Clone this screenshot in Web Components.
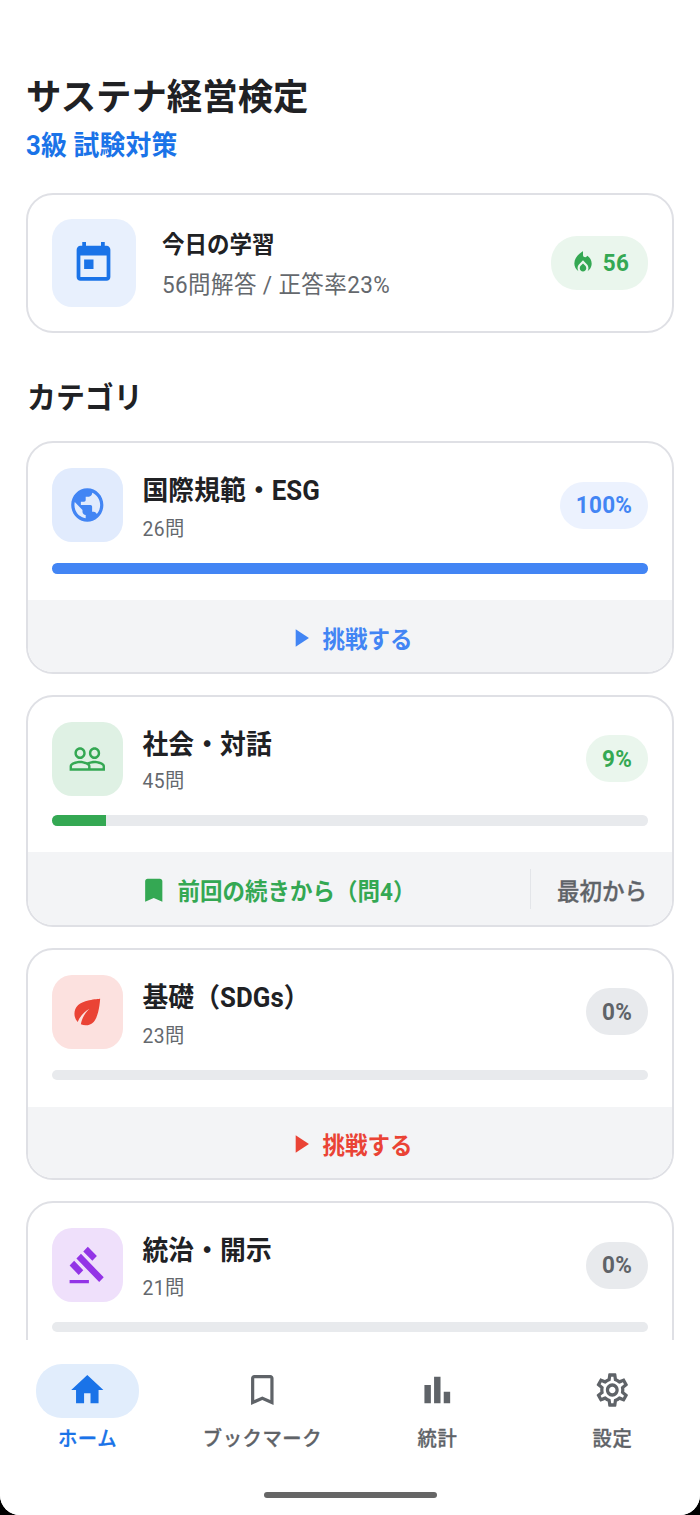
<!DOCTYPE html>
<html lang="ja">
<head>
<meta charset="utf-8">
<title>サステナ経営検定</title>
<style>
html,body{margin:0;padding:0;background:#000;height:1515px;overflow:hidden}
body{font-family:Roboto,"Noto Sans CJK JP",sans-serif;color:#202124}
</style>
</head>
<body>
<study-app></study-app>
<script>
const ICONS = {
  today: '<path d="M19 4h-1V2h-2v2H8V2H6v2H5c-1.11 0-1.99.9-1.99 2L3 20c0 1.1.89 2 2 2h14c1.1 0 2-.9 2-2V6c0-1.1-.9-2-2-2zm0 16H5V9h14v11zM7 11h5v5H7z"/>',
  flame: '<path d="M12 12.9l-2.13 2.09C9.31 15.55 9 16.28 9 17.06 9 18.68 10.35 20 12 20s3-1.32 3-2.94c0-.78-.31-1.52-.87-2.07L12 12.9zM16 6l-.44.55C14.38 8.02 12 7.19 12 5.3V2S4 6 4 13c0 2.92 1.56 5.47 3.89 6.86-.56-.79-.89-1.76-.89-2.8 0-1.32.52-2.56 1.47-3.5L12 10.1l3.53 3.47c.95.93 1.47 2.17 1.47 3.5 0 1.02-.31 1.96-.85 2.75 1.89-1.15 3.29-3.06 3.71-5.3.66-3.55-1.07-6.9-3.86-8.52z"/>',
  globe: '<path d="M12 2C6.48 2 2 6.48 2 12s4.48 10 10 10 10-4.48 10-10S17.52 2 12 2zm-1 17.93c-3.95-.49-7-3.85-7-7.93 0-.62.08-1.21.21-1.79L9 15v1c0 1.1.9 2 2 2v1.93zm6.9-2.54c-.26-.81-1-1.39-1.9-1.39h-1v-3c0-.55-.45-1-1-1H8v-2h2c.55 0 1-.45 1-1V7h2c1.1 0 2-.9 2-2v-.41c2.93 1.19 5 4.06 5 7.41 0 2.08-.8 3.97-2.1 5.39z"/>',
  people: '<path d="M16.5 13c-1.2 0-3.07.34-4.5 1-1.43-.67-3.3-1-4.5-1C5.33 13 1 14.08 1 16.25V19h22v-2.75c0-2.17-4.33-3.25-6.5-3.25zm-4 4.5h-10v-1.25c0-.54 2.56-1.75 5-1.75s5 1.21 5 1.75v1.25zm9 0H14v-1.25c0-.46-.2-.86-.52-1.22.88-.3 1.96-.53 3.02-.53 2.44 0 5 1.21 5 1.75v1.25zM7.500 12c1.93 0 3.500-1.570 3.500-3.500S9.430 5 7.500 5 4 6.570 4 8.500 5.570 12 7.500 12zm0-5.500c1.100 0 2 .9 2 2s-.9 2-2 2-2-.9-2-2 .9-2 2-2zm9 5.500c1.930 0 3.500-1.570 3.500-3.500S18.430 5 16.500 5 13 6.570 13 8.500s1.570 3.500 3.500 3.500zm0-5.500c1.100 0 2 .9 2 2s-.9 2-2 2-2-.9-2-2 .9-2 2-2z"/>',
  leaf: '<path d="M6.050 8.050c-2.730 2.730-2.730 7.150-.02 9.880 1.470-3.400 4.090-6.240 7.360-7.930-2.770 2.340-4.710 5.610-5.390 9.320 2.600 1.230 5.800.78 7.950-1.370C19.430 14.470 20 4 20 4S9.530 4.570 6.050 8.050z"/>',
  gavel: '<path d="M1 21h12v2H1zM5.245 8.070l2.830-2.827 14.140 14.142-2.828 2.828zM12.317 1l5.657 5.656-2.830 2.830-5.654-5.660zM3.825 9.485l5.657 5.657-2.828 2.828-5.657-5.657z"/>',
  play: '<path d="M8 5v14l11-7z"/>',
  mark: '<path d="M17 3H7c-1.100 0-1.990.9-1.990 2L5 21l7-3 7 3V5c0-1.100-.9-2-2-2z"/>',
  markline: '<path d="M17 3H7c-1.100 0-1.990.9-1.990 2L5 21l7-3 7 3V5c0-1.100-.9-2-2-2zm0 15l-5-2.180L7 18V5h10v13z"/>',
  home: '<path d="M10 20v-6h4v6h5v-8h3L12 3 2 12h3v8z"/>',
  chart: '<path d="M4 9h4v11H4zm12 4h4v7h-4zm-6-9h4v16h-4z"/>',
  gear: '<path d="M19.430 12.980c.04-.32.07-.64.07-.98 0-.34-.03-.66-.07-.98l2.110-1.650c.19-.15.24-.42.12-.64l-2-3.460c-.09-.16-.26-.25-.44-.25-.06 0-.12.01-.17.03l-2.490 1c-.52-.4-1.080-.73-1.690-.98l-.38-2.650C14.460 2.180 14.250 2 14 2h-4c-.25 0-.46.18-.49.42l-.38 2.650c-.61.25-1.170.59-1.690.98l-2.490-1c-.06-.02-.12-.03-.18-.03-.17 0-.34.09-.43.25l-2 3.460c-.13.22-.07.49.12.64l2.110 1.650c-.04.32-.07.65-.07.98 0 .33.03.66.07.98l-2.110 1.650c-.19.15-.24.42-.12.64l2 3.460c.09.16.26.25.44.25.06 0 .12-.01.17-.03l2.490-1c.52.4 1.080.73 1.690.98l.38 2.650c.03.24.24.42.49.42h4c.25 0 .46-.18.49-.42l.38-2.650c.61-.25 1.170-.59 1.690-.98l2.490 1c.06.02.12.03.18.03.17 0 .34-.09.43-.25l2-3.460c.12-.22.07-.49-.12-.64l-2.110-1.650zm-1.980-1.710c.04.31.05.52.05.73 0 .21-.02.43-.05.73l-.14 1.130.89.7 1.080.84-.7 1.210-1.270-.51-1.040-.42-.9.68c-.43.32-.84.56-1.250.73l-1.060.43-.16 1.130-.2 1.350h-1.400l-.19-1.350-.16-1.130-1.060-.43c-.43-.18-.83-.41-1.230-.71l-.91-.7-1.060.43-1.270.51-.7-1.210 1.080-.84.89-.7-.14-1.130c-.03-.31-.05-.54-.05-.74s.02-.43.05-.73l.14-1.130-.89-.7-1.080-.84.7-1.210 1.270.51 1.040.42.9-.68c.43-.32.84-.56 1.250-.73l1.060-.43.16-1.130.2-1.350h1.390l.19 1.350.16 1.130 1.060.43c.43.18.83.41 1.230.71l.91.7 1.060-.43 1.270-.51.7 1.210-1.070.85-.89.7.14 1.130zM12 8c-2.210 0-4 1.790-4 4s1.790 4 4 4 4-1.790 4-4-1.790-4-4-4zm0 6c-1.100 0-2-.9-2-2s.9-2 2-2 2 .9 2 2-.9 2-2 2z"/>'
};
function define(name, render) {
  customElements.define(name, class extends HTMLElement {
    connectedCallback() {
      if (this.shadowRoot) return;
      this.attachShadow({ mode: 'open' }).innerHTML = render(this);
    }
  });
}
const at = (el, name, fallback = '') => el.getAttribute(name) ?? fallback;

/* Icon: size is the width; the page's vertical unit is 3.7% taller */
define('ui-icon', el => {
  const s = +at(el, 'size', 38);
  return `<style>:host{display:block;flex:none;width:${s}px;height:${s * 1.037}px}svg{display:block;width:100%;height:100%;fill:currentColor}</style>
  <svg viewBox="0 0 24 24" preserveAspectRatio="none">${ICONS[at(el, 'name')]}</svg>`;
});

/* One line of text in a box of fixed height; "stroke" thickens regular glyphs to a medium weight */
define('ui-text', el => `<style>
:host{display:block;flex:none;font-size:${at(el, 'size')}px;font-weight:${at(el, 'weight', 400)};height:${at(el, 'h', 30)}px;line-height:${at(el, 'h', 30)}px;letter-spacing:${at(el, 'ls', 0)}px;white-space:nowrap;transform:translateY(${at(el, 'dy', 1.5)}px) scaleY(1.037);-webkit-text-stroke:${at(el, 'stroke', 0)}px currentColor}
</style><slot></slot>`);

define('ui-pill', () => `<style>
:host{display:flex;flex:none;align-items:center;justify-content:center;box-sizing:border-box;width:var(--w);height:var(--h,47px);border-radius:26px;background:var(--bg);color:var(--fg)}
</style><slot></slot>`);

define('icon-tile', () => `<style>
:host{display:flex;flex:none;align-items:center;justify-content:center;width:var(--w,71px);height:var(--h,74px);border-radius:20px/20.500px;background:var(--bg);color:var(--fg)}
</style><slot></slot>`);

define('today-card', () => `<style>
:host{display:flex;box-sizing:border-box;height:140.500px;border:2px solid #dfe0e5;border-radius:27px;padding:0 24px;align-items:center}
icon-tile{--w:83.500px;--h:87.500px;--bg:#e8f0fd;--fg:#1a73e8}
icon-tile ui-icon{margin-top:-3px}
.t{flex:1;padding-left:26.500px}
.s{color:#64686d;margin-top:10.500px}
ui-pill{--w:97px;--h:54px;--bg:#eaf6ed;--fg:#34a853;gap:7px}
</style>
<icon-tile><ui-icon name="today" size="45"></ui-icon></icon-tile>
<div class="t"><ui-text size="22.500" weight="700" h="30">今日の学習</ui-text><ui-text class="s" size="22.500" h="30" ls="0.4">56問解答 / 正答率23%</ui-text></div>
<ui-pill><ui-icon name="flame" size="26"></ui-icon><ui-text size="22.500" weight="700" ls="0.3" dy="0">56</ui-text></ui-pill>`);

define('category-card', el => {
  const pct = at(el, 'pct');
  const foot = el.hasAttribute('resume')
    ? `<div class="main resume"><ui-icon name="mark" size="29.500"></ui-icon><ui-text size="22.500" weight="700">${at(el, 'resume')}</ui-text></div><div class="rule"></div><div class="restart"><ui-text size="22.500" weight="500" stroke="0.3">最初から</ui-text></div>`
    : el.hasAttribute('action') ? `<div class="main"><ui-icon name="play" size="29"></ui-icon><ui-text size="22.500" weight="700">${at(el, 'action')}</ui-text></div>` : '';
  return `<style>
:host{display:flex;flex-direction:column;flex:none;box-sizing:border-box;height:232.500px;border:2px solid #dfe0e5;border-radius:27px;overflow:hidden;background:#fff}
.head{display:flex;flex:none;align-items:center;height:74px;padding:25px 24px 0}
icon-tile{--bg:var(--tint);--fg:var(--accent)}
.t{flex:1;padding-left:19.500px;align-self:flex-start;padding-top:5px}
.s{color:#64686d;margin-top:${at(el, 'gap', 10)}px}
ui-pill{--w:${pct.length > 2 ? 88 : 62}px;--bg:var(--badge);--fg:var(--badge-text)}
.bar{height:10.500px;margin:${at(el, 'bar', 21)}px 24px 0;border-radius:5.200px;background:#e8eaed;overflow:hidden;flex:none}
.fill{height:100%;width:${pct}%;background:var(--accent)}
.foot{display:flex;align-items:center;flex:1;margin-top:26.500px;background:#f3f4f6;color:var(--accent)}
.main{flex:1;display:flex;align-items:center;justify-content:center;gap:7px;padding-top:3px}
.main ui-icon{margin-left:-1px}
.resume{gap:9.500px}
.resume ui-icon{margin-left:-4px}
.rule{width:1px;height:40px;background:#e3e5e9}
.restart{color:#5f6368;padding:3px 25px 0 26px}
</style>
<div class="head"><icon-tile><ui-icon name="${at(el, 'icon')}" size="38.600"></ui-icon></icon-tile>
<div class="t"><ui-text size="25.800" weight="700" h="33" ls="0.05">${at(el, 'name')}</ui-text><ui-text class="s" size="19.300" h="24" ls="0.4">${at(el, 'count')}</ui-text></div>
<ui-pill><ui-text size="22.500" weight="700" ls="0.3" dy="0">${pct}%</ui-text></ui-pill></div>
<div class="bar"><div class="fill"></div></div>
<div class="foot">${foot}</div>`;
});

define('nav-item', el => `<style>
:host{display:flex;flex-direction:column;align-items:center;flex:1;color:#5f6368;--w:103px;--h:54px;--bg:transparent;--fg:inherit}
:host([active]){color:#1a73e8;--bg:#e1edfc}
ui-text{margin-top:5.500px}
</style>
<ui-pill><ui-icon name="${at(el, 'icon')}" size="38.600"></ui-icon></ui-pill>
<ui-text size="19.300" weight="500" ls="0.6" dy="2" stroke="0.3"><slot></slot></ui-text>`);

define('nav-bar', () => `<style>
:host{display:flex;flex-direction:column;flex:none;height:175px;box-sizing:border-box;padding-top:23.500px;background:#fff}
.items{display:flex;flex:none;height:128.500px}
.handle{flex:none;align-self:center;width:173px;height:6px;border-radius:3px;background:#666}
</style>
<div class="items"><nav-item icon="home" active>ホーム</nav-item><nav-item icon="markline">ブックマーク</nav-item><nav-item icon="chart">統計</nav-item><nav-item icon="gear">設定</nav-item></div>
<div class="handle"></div>`);

define('study-app', () => `<style>
:host{display:flex;flex-direction:column;width:700px;height:1515px;background:#fff;border-radius:0 0 20px 20px;overflow:hidden}
main{flex:1;min-height:0;overflow:hidden;display:flex;flex-direction:column;padding:73px 26px 0}
.sub{color:#1a73e8;margin-top:9px}
today-card{flex:none;margin-top:31.700px}
.sec{margin:43.500px 0 24.600px 1px}
.list{display:flex;flex-direction:column;gap:20.800px}
.blue{--accent:#4285f4;--tint:#e1ebfd;--badge:#ecf2fe;--badge-text:#4285f4}
.green{--accent:#34a853;--tint:#dff1e4;--badge:#eaf6ed;--badge-text:#34a853}
.red{--accent:#ea4335;--tint:#fce1df;--badge:#e8eaed;--badge-text:#5f6368}
.purple{--accent:#9334e6;--tint:#efe0fb;--badge:#e8eaed;--badge-text:#5f6368}
</style>
<main>
<ui-text size="35.400" weight="700" h="46">サステナ経営検定</ui-text>
<ui-text class="sub" size="25.800" weight="700" h="33" ls="0.2">3級 試験対策</ui-text>
<today-card></today-card>
<ui-text class="sec" size="28.900" weight="700" h="40" dy="0.5">カテゴリ</ui-text>
<div class="list">
<category-card class="blue" icon="globe" name="国際規範・ESG" count="26問" pct="100" action="挑戦する"></category-card>
<category-card class="green" icon="people" name="社会・対話" count="45問" pct="9" resume="前回の続きから（問4）" gap="8.500" bar="19.500"></category-card>
<category-card class="red" icon="leaf" name="基礎（SDGs）" count="23問" pct="0" action="挑戦する"></category-card>
<category-card class="purple" icon="gavel" name="統治・開示" count="21問" pct="0" gap="8.500" bar="19.500"></category-card>
</div>
</main>
<nav-bar></nav-bar>`);
</script>
</body>
</html>
